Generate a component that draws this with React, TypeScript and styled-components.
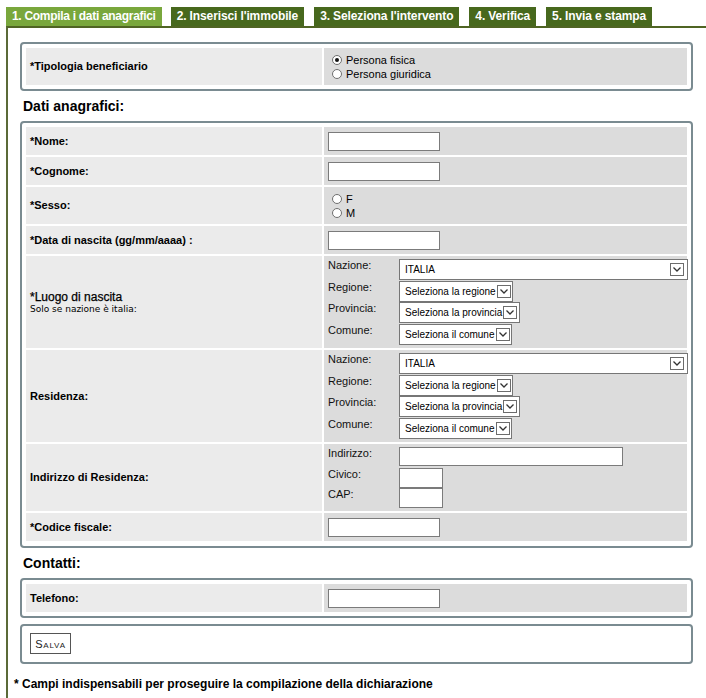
import React from "react";
import styled, { createGlobalStyle } from "styled-components";

const GlobalStyle = createGlobalStyle`
  html, body {
    margin: 0;
    padding: 0;
    background: #ffffff;
    font-family: "Liberation Sans", Arial, sans-serif;
    color: #000;
  }
`;

const Page = styled.div`
  padding: 7px 0 0 6px;
`;

const TabBar = styled.div`
  display: flex;
  gap: 10px;
  height: 19px;
`;

const Tab = styled.div<{ $active?: boolean }>`
  background: ${(p) => (p.$active ? "#79a73c" : "#47681d")};
  color: #ffffff;
  font-weight: bold;
  font-size: 12px;
  letter-spacing: ${(p) => (p.$active ? "-0.3px" : "-0.12px")};
  line-height: 19px;
  padding: 0 6px;
  white-space: nowrap;
  margin-right: ${(p) => (p.$active ? "-1px" : "0")};
`;

const Content = styled.div`
  border-top: 2px solid #4f6423;
  border-left: 2px solid #5b6a38;
  padding: 14px 0 0 6px;
  min-height: 680px;
  box-sizing: border-box;
`;

const Box = styled.div<{ $mt?: number; $pb?: number }>`
  width: 673px;
  box-sizing: border-box;
  margin: ${(p) => p.$mt ?? 0}px 0 0 6px;
  border: 2px solid #7a8b91;
  border-radius: 4px;
  padding: 4px 4px ${(p) => p.$pb ?? 4}px;
  display: grid;
  row-gap: 2px;
`;

const ButtonBox = styled(Box)`
  padding: 7px 8px 8px;
  display: block;
`;

const Row = styled.div<{ $h: number }>`
  display: grid;
  grid-template-columns: 296px 363px;
  column-gap: 2px;
  height: ${(p) => p.$h}px;
`;

const LabelCell = styled.div`
  background: #ebebeb;
  padding: 0 4px;
  display: flex;
  flex-direction: column;
  justify-content: center;
  font-size: 11px;
  font-weight: bold;
  line-height: 13px;
`;

const BigLabel = styled.span`
  font-size: 12px;
  font-weight: normal;
  line-height: 14px;
  -webkit-text-stroke: 0.25px #000;
`;

const Hint = styled.span`
  font-family: "DejaVu Sans", sans-serif;
  font-size: 9px;
  font-weight: normal;
  line-height: 11px;
`;

const ValueCell = styled.div<{ $top?: boolean }>`
  background: #dcdcdc;
  padding: ${(p) => (p.$top ? "3px 0 0 4px" : "0 4px")};
  display: flex;
  flex-direction: column;
  justify-content: ${(p) => (p.$top ? "flex-start" : "center")};
  font-size: 11px;
`;

const TextInput = styled.input<{ $w: number }>`
  width: ${(p) => p.$w}px;
  height: ${(p) => (p.$w < 60 ? 20 : 19)}px;
  box-sizing: border-box;
  border: 1px solid #7b7b7b;
  background: #fff;
  padding: 0 3px;
  margin: 0;
  font: 11px "Liberation Sans", Arial, sans-serif;
`;

const SubGrid = styled.div<{ $rh: number }>`
  display: grid;
  grid-template-columns: 71px auto;
  grid-auto-rows: ${(p) => p.$rh}px;
  align-items: start;
`;

const SubLabel = styled.div`
  font-size: 11px;
  line-height: 13px;
  color: #111;
`;

const FakeSelect = styled.div<{ $w: number }>`
  width: ${(p) => p.$w}px;
  height: 21px;
  box-sizing: border-box;
  border: 1px solid #767676;
  background: #fff;
  display: flex;
  align-items: center;
  justify-content: space-between;
  padding: 0 3px 0 5px;
  font-size: 10px;
  white-space: nowrap;
  overflow: hidden;
`;

const ArrowBox = styled.span`
  flex: none;
  width: 14px;
  height: 13px;
  box-sizing: border-box;
  border: 1px solid #6c6c6c;
  display: flex;
  align-items: center;
  justify-content: center;
  margin-left: 1px;
`;

const RadioGroup = styled.div`
  display: flex;
  flex-direction: column;
`;

const RadioLine = styled.label`
  display: flex;
  align-items: center;
  gap: 4px;
  padding-left: 4px;
  font-size: 11px;
  line-height: 14px;
`;

const RadioDot = styled.span<{ $on?: boolean }>`
  width: 10px;
  height: 10px;
  box-sizing: border-box;
  border-radius: 50%;
  border: 1px solid #6f6f6f;
  background: #fff;
  display: flex;
  align-items: center;
  justify-content: center;
  &::after {
    content: "";
    width: 4px;
    height: 4px;
    border-radius: 50%;
    background: ${(p) => (p.$on ? "#111" : "transparent")};
  }
`;

const SectionTitle = styled.h3`
  margin: 7px 0 7px 9px;
  font-size: 14px;
  line-height: 16px;
  font-weight: bold;
`;

const SaveButton = styled.button`
  width: 41px;
  height: 21px;
  box-sizing: border-box;
  border: 1px solid #555;
  background: #fff;
  padding: 0;
  font-family: "Liberation Sans", Arial, sans-serif;
  font-size: 11px;
  font-variant: small-caps;
  letter-spacing: 0.8px;
  color: #222;
`;

const Footnote = styled.div`
  margin-top: 13px;
  font-size: 12px;
  font-weight: bold;
  line-height: 14px;
`;

const Chevron = () => (
  <svg width="8" height="5" viewBox="0 0 8 5">
    <polyline points="0.5,0.5 4,4 7.5,0.5" fill="none" stroke="#333" strokeWidth="1.3" />
  </svg>
);

const Select: React.FC<{ w: number; text: string }> = ({ w, text }) => (
  <FakeSelect $w={w}>
    <span>{text}</span>
    <ArrowBox>
      <Chevron />
    </ArrowBox>
  </FakeSelect>
);

const PlaceFields = () => (
  <SubGrid $rh={21.5}>
    <SubLabel>Nazione:</SubLabel>
    <Select w={289} text="ITALIA" />
    <SubLabel>Regione:</SubLabel>
    <Select w={114} text="Seleziona la regione" />
    <SubLabel>Provincia:</SubLabel>
    <Select w={121} text="Seleziona la provincia" />
    <SubLabel>Comune:</SubLabel>
    <Select w={113} text="Seleziona il comune" />
  </SubGrid>
);

const tabs = [
  "1. Compila i dati anagrafici",
  "2. Inserisci l'immobile",
  "3. Seleziona l'intervento",
  "4. Verifica",
  "5. Invia e stampa",
];

export default function App() {
  return (
    <Page>
      <GlobalStyle />
      <TabBar>
        {tabs.map((t, i) => (
          <Tab key={t} $active={i === 0}>
            {t}
          </Tab>
        ))}
      </TabBar>
      <Content>
        <Box>
          <Row $h={37}>
            <LabelCell>*Tipologia beneficiario</LabelCell>
            <ValueCell>
              <RadioGroup>
                <RadioLine>
                  <RadioDot $on />
                  Persona fisica
                </RadioLine>
                <RadioLine>
                  <RadioDot />
                  Persona giuridica
                </RadioLine>
              </RadioGroup>
            </ValueCell>
          </Row>
        </Box>

        <SectionTitle>Dati anagrafici:</SectionTitle>
        <Box $pb={5}>
          <Row $h={28}>
            <LabelCell>*Nome:</LabelCell>
            <ValueCell>
              <TextInput $w={112} />
            </ValueCell>
          </Row>
          <Row $h={28}>
            <LabelCell>*Cognome:</LabelCell>
            <ValueCell>
              <TextInput $w={112} />
            </ValueCell>
          </Row>
          <Row $h={37}>
            <LabelCell>*Sesso:</LabelCell>
            <ValueCell>
              <RadioGroup>
                <RadioLine>
                  <RadioDot />F
                </RadioLine>
                <RadioLine>
                  <RadioDot />M
                </RadioLine>
              </RadioGroup>
            </ValueCell>
          </Row>
          <Row $h={28}>
            <LabelCell>*Data di nascita (gg/mm/aaaa) :</LabelCell>
            <ValueCell>
              <TextInput $w={112} />
            </ValueCell>
          </Row>
          <Row $h={92}>
            <LabelCell>
              <BigLabel>*Luogo di nascita</BigLabel>
              <Hint>Solo se nazione è italia:</Hint>
            </LabelCell>
            <ValueCell $top>
              <PlaceFields />
            </ValueCell>
          </Row>
          <Row $h={92}>
            <LabelCell>Residenza:</LabelCell>
            <ValueCell $top>
              <PlaceFields />
            </ValueCell>
          </Row>
          <Row $h={67}>
            <LabelCell>Indirizzo di Residenza:</LabelCell>
            <ValueCell $top>
              <SubGrid $rh={20.5}>
                <SubLabel>Indirizzo:</SubLabel>
                <TextInput $w={224} />
                <SubLabel>Civico:</SubLabel>
                <TextInput $w={44} />
                <SubLabel>CAP:</SubLabel>
                <TextInput $w={44} />
              </SubGrid>
            </ValueCell>
          </Row>
          <Row $h={28}>
            <LabelCell>*Codice fiscale:</LabelCell>
            <ValueCell>
              <TextInput $w={112} />
            </ValueCell>
          </Row>
        </Box>

        <SectionTitle>Contatti:</SectionTitle>
        <Box>
          <Row $h={28}>
            <LabelCell>Telefono:</LabelCell>
            <ValueCell>
              <TextInput $w={112} />
            </ValueCell>
          </Row>
        </Box>

        <ButtonBox $mt={6}>
          <SaveButton>Salva</SaveButton>
        </ButtonBox>

        <Footnote>* Campi indispensabili per proseguire la compilazione della dichiarazione</Footnote>
      </Content>
    </Page>
  );
}
